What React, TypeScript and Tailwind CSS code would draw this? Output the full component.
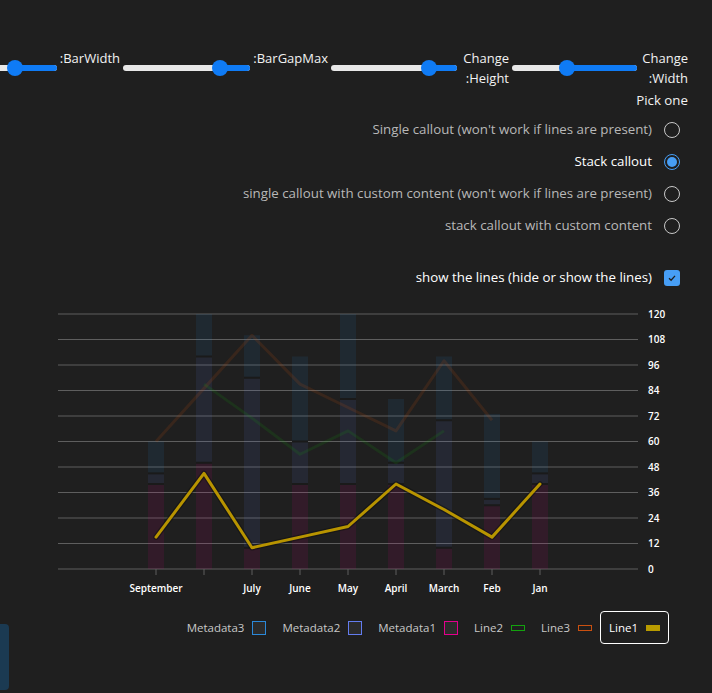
import React from "react";

const FONT = '"Segoe UI", "Open Sans", "Noto Sans", sans-serif';

function Slider({ width, thumb }: { width: number; thumb: number }) {
  return (
    <div className="relative h-10 shrink-0 flex items-center" style={{ width }} dir="ltr">
      <div className="relative h-[6px] w-full rounded-full bg-[#e8e8e8]">
        <div className="absolute top-0 bottom-0 right-0 rounded-full bg-[#0f7bf5]" style={{ left: thumb }} />
      </div>
      <div
        className="absolute top-1/2 h-4 w-4 -translate-y-1/2 rounded-full bg-[#0f7bf5]"
        style={{ left: thumb - 8 }}
      />
    </div>
  );
}

function Label({ w, children }: { w: number; children: React.ReactNode }) {
  return (
    <div className="shrink-0 text-[13px] leading-5 text-[#f2f2f2]" style={{ width: w }}>
      {children}
    </div>
  );
}

function Radio({ label, checked }: { label: string; checked?: boolean }) {
  return (
    <div className="flex h-8 items-center gap-3">
      <div
        className={
          "flex h-4 w-4 items-center justify-center rounded-full border " +
          (checked ? "border-[#479ef5]" : "border-[#c8c8c8]")
        }
      >
        {checked && <div className="h-[10px] w-[10px] rounded-full bg-[#479ef5]" />}
      </div>
      <span className={"text-[13.3px] " + (checked ? "text-white" : "text-[#b8b8b8]")}>{label}</span>
    </div>
  );
}

const cats = ["September", "", "July", "June", "May", "April", "March", "Feb", "Jan"];
const m1 = [40, 50, 10, 40, 40, 40, 10, 30, 40];
const m2 = [5, 50, 80, 20, 40, 10, 60, 3, 5];
const m3 = [15, 20, 20, 40, 40, 30, 30, 40, 15];
const L1: (number | null)[] = [15, 45, 10, 15, 20, 40, 28, 15, 40];
const L2: (number | null)[] = [null, 87, 71, 54, 65, 50, 65, null, null];
const L3: (number | null)[] = [60, 85, 110, 87, 76, 65, 98, 70, null];

const Y = (v: number) => 569 - v * 2.125;
const X = (i: number) => 156 + 48 * i;

function pathOf(d: (number | null)[]) {
  let s = "";
  d.forEach((v, i) => {
    if (v == null) return;
    s += (s ? " L" : "M") + X(i) + " " + Y(v);
  });
  return s;
}

function Chart() {
  const ticks = [0, 12, 24, 36, 48, 60, 72, 84, 96, 108, 120];
  return (
    <svg width={712} height={300} viewBox="0 300 712 300" className="block">
      {ticks.map((t) => (
        <line key={t} x1={58} x2={638} y1={Y(t)} y2={Y(t)} stroke="#5e5e5e" strokeWidth={1} />
      ))}
      {ticks.map((t) => (
        <text
          key={"t" + t}
          x={648}
          y={Y(t) + 3.5}
          fill="#ffffff"
          fontSize={10}
          fontWeight={600}
          fontFamily={FONT}
        >
          {t}
        </text>
      ))}
      {cats.map((c, i) => {
        const x = X(i);
        const a = m1[i];
        const b = a + m2[i];
        const t = b + m3[i];
        return (
          <g key={i}>
            <rect x={x - 8} y={Y(a)} width={16} height={Y(0) - Y(a)} fill="#e3008c" fillOpacity={0.1} />
            <rect x={x - 8} y={Y(b)} width={16} height={Y(a) - Y(b)} fill="#637cef" fillOpacity={0.1} />
            <rect x={x - 8} y={Y(t)} width={16} height={Y(b) - Y(t)} fill="#2b88d8" fillOpacity={0.1} />
            <line x1={x - 8} x2={x + 8} y1={Y(a)} y2={Y(a)} stroke="#1a1a1a" strokeWidth={2} />
            <line x1={x - 8} x2={x + 8} y1={Y(b)} y2={Y(b)} stroke="#1a1a1a" strokeWidth={2} />
            <line x1={x} x2={x} y1={569} y2={575} stroke="#5e5e5e" strokeWidth={1} />
            <text
              x={x}
              y={592}
              textAnchor="middle"
              fill="#ffffff"
              fontSize={10}
              fontWeight={600}
              fontFamily={FONT}
            >
              {c}
            </text>
          </g>
        );
      })}
      <path d={pathOf(L3)} fill="none" stroke="#ca5010" strokeOpacity={0.15} strokeWidth={3} strokeLinejoin="round" />
      <path d={pathOf(L2)} fill="none" stroke="#13a10e" strokeOpacity={0.15} strokeWidth={3} strokeLinejoin="round" />
      <path d={pathOf(L1)} fill="none" stroke="#111111" strokeOpacity={0.55} strokeWidth={5.5} strokeLinejoin="round" strokeLinecap="round" />
      <path d={pathOf(L1)} fill="none" stroke="#b89400" strokeWidth={3} strokeLinejoin="round" strokeLinecap="round" />
    </svg>
  );
}

function LegendItem({
  label,
  kind,
  color,
  selected,
}: {
  label: string;
  kind: "box" | "line";
  color: string;
  selected?: boolean;
}) {
  return (
    <div
      className={
        "flex h-[33px] items-center gap-2 px-2 " +
        (selected ? "rounded-[4px] border border-white" : "")
      }
    >
      {kind === "box" ? (
        <div className="h-[14px] w-[14px] border bg-[#2b2b2b]" style={{ borderColor: color }} />
      ) : (
        <div
          className="h-[6px] w-[14px] border"
          style={{ borderColor: color, background: selected ? color : "#1f1f1f" }}
        />
      )}
      <span className={"text-[11.5px] " + (selected ? "text-white" : "text-[#c8c8c8]")}>{label}</span>
    </div>
  );
}

export default function App() {
  return (
    <div
      dir="rtl"
      className="relative min-h-[693px] w-[712px] overflow-hidden bg-[#1f1f1f]"
      style={{ fontFamily: FONT }}
    >
      <div className="flex flex-row items-start gap-[3px] overflow-hidden pr-6 pt-12">
        <Label w={48}>Change Width:</Label>
        <Slider width={125} thumb={55} />
        <Label w={49}>Change Height:</Label>
        <Slider width={126} thumb={98} />
        <Label w={75}>BarGapMax:</Label>
        <Slider width={127} thumb={97} />
        <Label w={60}>BarWidth:</Label>
        <Slider width={125} thumb={83} />
      </div>
      <div className="mt-[2px] pr-6 text-[13.3px] leading-5 text-[#f2f2f2]">Pick one</div>
      <div className="mt-1 flex flex-col pr-8">
        <Radio label="Single callout (won't work if lines are present)" />
        <Radio label="Stack callout" checked />
        <Radio label="single callout with custom content (won't work if lines are present)" />
        <Radio label="stack callout with custom content" />
      </div>
      <div className="mt-5 flex h-8 items-center gap-3 pr-8">
        <div className="flex h-4 w-4 items-center justify-center rounded-[3px] bg-[#479ef5]">
          <svg width="10" height="10" viewBox="0 0 10 10">
            <path d="M2 5.2 L4.1 7.2 L8 2.9" fill="none" stroke="#1f1f1f" strokeWidth="1.3" />
          </svg>
        </div>
        <span className="text-[13.3px] text-white">show the lines (hide or show the lines)</span>
      </div>
      <div className="mt-[6px]" dir="ltr">
        <Chart />
      </div>
      <div className="mt-[11px] flex flex-row pr-[43px]">
        <LegendItem label="Line1" kind="line" color="#b89b00" selected />
        <LegendItem label="Line3" kind="line" color="#ca5010" />
        <LegendItem label="Line2" kind="line" color="#13a10e" />
        <LegendItem label="Metadata1" kind="box" color="#e3008c" />
        <LegendItem label="Metadata2" kind="box" color="#637cef" />
        <LegendItem label="Metadata3" kind="box" color="#2b88d8" />
      </div>
      <div className="absolute left-0 top-[624px] h-[66px] w-[9px] rounded-r-[4px] bg-[#1b3a52]" />
    </div>
  );
}
